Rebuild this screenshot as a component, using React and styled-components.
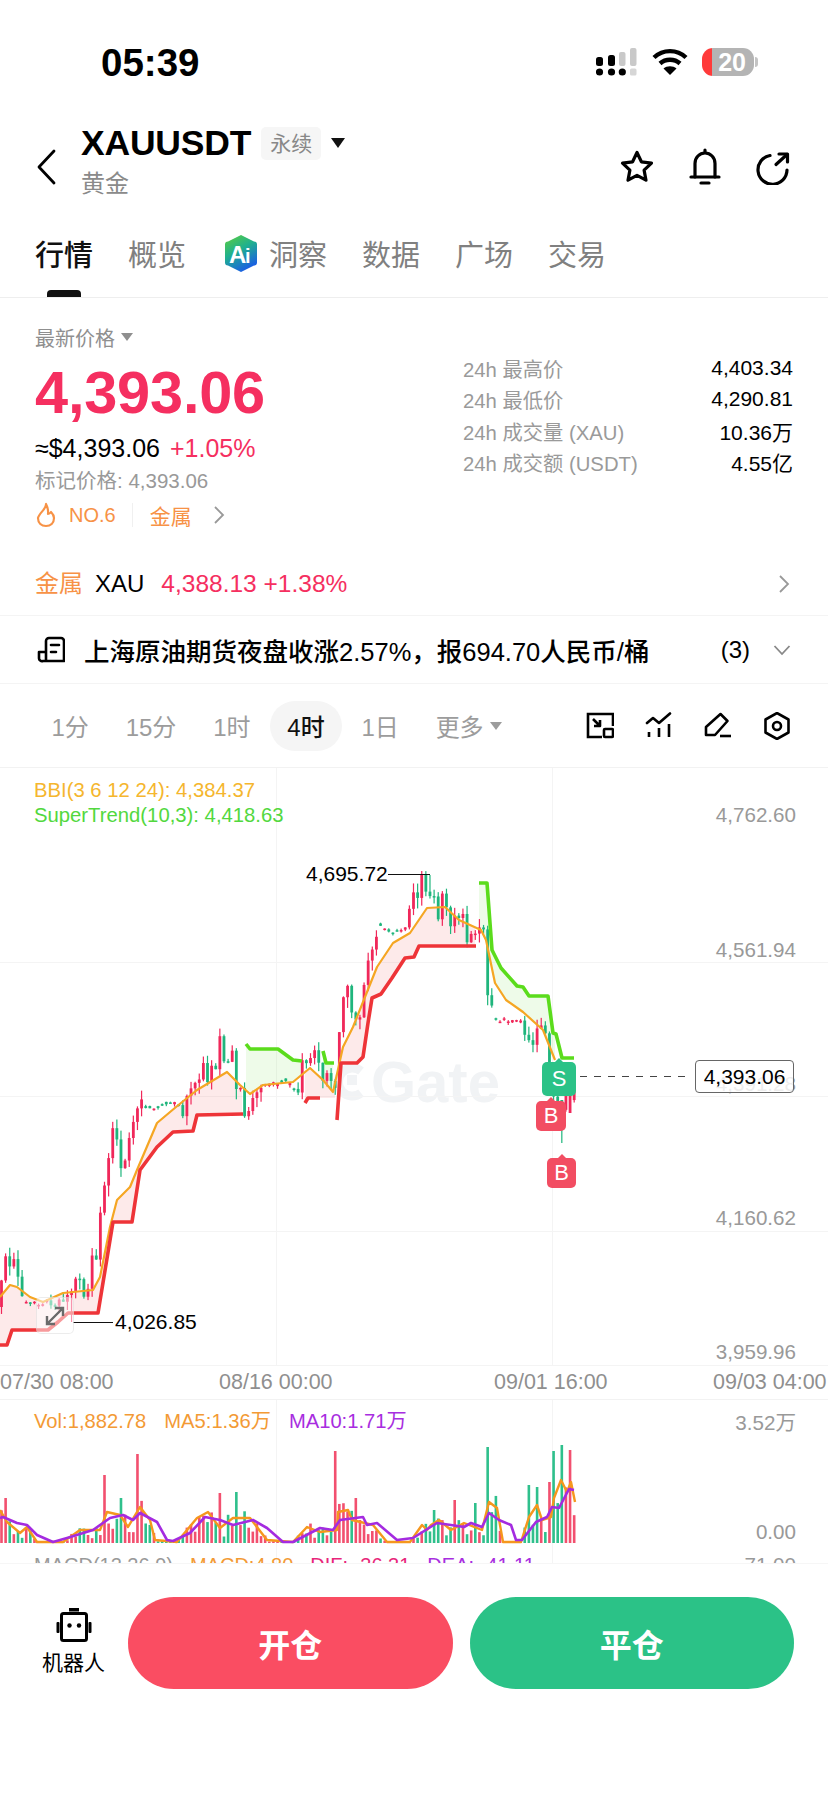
import React from 'react';
import styled, { createGlobalStyle } from 'styled-components';

const Global = createGlobalStyle`
  html, body { margin: 0; padding: 0; background: #fff; }
  body { font-family: "Liberation Sans", "Noto Sans CJK SC", sans-serif; color: #000; }
  * { box-sizing: border-box; }
`;

const RED = '#f52f60';
const CANDLE_RED = '#f0285a';
const CANDLE_GREEN = '#1fb57c';
const ORANGE = '#f79246';

/* ---------- chart data ---------- */
const interp = (pts, x) => {
  if (x <= pts[0][0]) return pts[0][1];
  for (let i = 1; i < pts.length; i++) {
    if (x <= pts[i][0]) {
      const [x0, y0] = pts[i - 1];
      const [x1, y1] = pts[i];
      return y0 + ((y1 - y0) * (x - x0)) / (x1 - x0 || 1);
    }
  }
  return pts[pts.length - 1][1];
};
const rng = (seed) => () => {
  seed = (seed + 0x6d2b79f5) | 0;
  let t = Math.imul(seed ^ (seed >>> 15), 1 | seed);
  t = (t + Math.imul(t ^ (t >>> 7), 61 | t)) ^ t;
  return ((t ^ (t >>> 14)) >>> 0) / 4294967296;
};
const toPts = (a) => a.map((p) => p.join(',')).join(' ');

const STEP = 4.12;
const COUNT = 140;
const pricePath = [[0,1307],[5,1262],[12,1268],[18,1290],[25,1302],[45,1304],[50,1296],[62,1288],[72,1296],[85,1290],[92,1270],[98,1240],[103,1205],[108,1170],[113,1142],[122,1165],[130,1125],[137,1105],[143,1110],[165,1105],[177,1100],[183,1118],[190,1100],[197,1065],[205,1078],[215,1058],[222,1045],[230,1052],[240,1090],[248,1115],[255,1095],[265,1085],[290,1082],[296,1090],[305,1062],[315,1055],[325,1072],[332,1100],[336,1085],[341,1010],[346,990],[352,1005],[360,1015],[365,985],[372,950],[378,925],[392,933],[405,930],[412,900],[420,888],[428,880],[437,915],[441,892],[452,923],[461,912],[470,950],[481,937],[486,925],[489,1033],[492,1020],[521,1020],[524,1017],[528,1055],[535,1030],[544,1035],[550,1060],[555,1090],[561,1120],[568,1100],[572,1090]];
const flats = [[25,50],[145,180],[265,296],[378,408],[492,522]];
const isFlat = (x) => flats.some(([a, b]) => x >= a && x <= b);

const buildCandles = () => {
  const r = rng(23);
  const out = [];
  let prev = pricePath[0][1];
  for (let i = 0; i < COUNT; i++) {
    const x = 1.5 + i * STEP;
    const flat = isFlat(x);
    const close = interp(pricePath, x) + (r() - 0.5) * (flat ? 3.5 : 32);
    const open = flat ? close + (r() - 0.5) * 5 : prev;
    const top = Math.min(open, close) - r() * (flat ? 1.5 : 9);
    const bottom = Math.max(open, close) + r() * (flat ? 3 : 11);
    out.push({ x, open, close, top, bottom });
    prev = close;
  }
  const nearest = (tx) => out.reduce((a, c) => (Math.abs(c.x - tx) < Math.abs(a.x - tx) ? c : a));
  nearest(428).top = 875;
  nearest(73).bottom = 1322;
  nearest(561).bottom = 1143;
  const a = nearest(561);
  a.open = 1100;
  a.close = 1110;
  const b = nearest(569);
  b.open = 1113;
  b.close = 1085;
  return out;
};
const candles = buildCandles();

const redSt = [
  [[0,1345],[7,1345],[12,1330],[35,1330],[48,1330],[58,1322],[68,1313],[98,1313],[113,1222],[132,1222],[140,1170],[157,1147],[173,1132],[193,1131],[197,1115],[243,1114]],
  [[305,1103],[308,1098],[320,1098]],
  [[337,1120],[341,1063],[357,1063],[363,1057],[368,1023],[372,998],[381,994],[392,978],[405,958],[414,957],[419,946],[476,946]],
];
const greenSt = [
  [[246,1044],[250,1049],[278,1049],[293,1060],[302,1061]],
  [[323,1051],[326,1063],[334,1063]],
  [[479,883],[487,883],[492,950],[501,968],[517,986],[523,987],[529,996],[548,996],[553,1033],[556,1034],[562,1058],[574,1058]],
];
const bbi = [[0,1297],[10,1285],[17,1287],[30,1297],[43,1302],[63,1293],[93,1290],[100,1277],[110,1227],[117,1200],[130,1187],[137,1170],[157,1123],[176,1107],[197,1090],[227,1072],[240,1085],[250,1094],[263,1085],[293,1082],[310,1068],[323,1080],[333,1092],[343,1047],[353,1027],[365,997],[377,967],[393,943],[410,933],[427,908],[445,907],[459,920],[481,930],[486,940],[495,983],[506,1000],[523,1012],[543,1030],[555,1060]];

const band = (a, b, x0, x1) => {
  const top = [];
  const bot = [];
  for (let x = x0; x <= x1; x += 2) {
    top.push([x, interp(a, x)]);
    bot.unshift([x, interp(b, x)]);
  }
  return toPts([...top, ...bot]);
};

const ma10 = [[0,1518],[3,1517],[17,1523],[27,1525],[37,1535],[53,1542],[67,1538],[93,1530],[110,1518],[123,1515],[133,1520],[140,1513],[157,1522],[167,1540],[173,1541],[190,1533],[205,1517],[220,1520],[233,1525],[253,1520],[267,1528],[283,1542],[293,1542],[320,1528],[333,1530],[340,1520],[363,1517],[367,1525],[377,1523],[397,1540],[413,1538],[437,1523],[451,1525],[464,1527],[471,1523],[482,1527],[489,1513],[499,1520],[511,1525],[516,1540],[522,1540],[536,1522],[547,1517],[552,1507],[559,1508],[569,1489],[574,1490]];
const ma5 = [[0,1510],[7,1522],[20,1533],[27,1527],[37,1542],[63,1542],[80,1530],[100,1530],[107,1512],[120,1515],[128,1527],[140,1507],[150,1520],[155,1540],[177,1542],[197,1518],[208,1512],[220,1528],[233,1518],[250,1518],[267,1540],[293,1542],[307,1527],[320,1532],[337,1530],[338,1512],[348,1510],[352,1520],[373,1525],[387,1542],[410,1542],[422,1525],[427,1530],[431,1525],[439,1520],[451,1530],[464,1523],[482,1530],[489,1502],[497,1508],[503,1542],[521,1542],[529,1517],[537,1505],[542,1520],[551,1517],[554,1498],[561,1480],[567,1492],[571,1482],[575,1502]];
const spikes = { 6: 1498, 139: 1454, 105: 1475, 337: 1451, 221: 1493, 238: 1492, 122: 1498, 354: 1498, 486: 1447, 489: 1473, 552: 1451, 561: 1445, 569: 1450, 527: 1485, 536: 1487, 549: 1482, 476: 1503, 436: 1510, 454: 1500 };
const greenSpikes = new Set([486, 489, 552, 561, 527, 536, 238, 122, 476, 436]);
const buildBars = () => {
  const r = rng(5);
  const keys = Object.keys(spikes).map(Number);
  return candles.map((c) => {
    const k = keys.find((s) => Math.abs(s - c.x) <= STEP / 2);
    const avg = 1543 - interp(ma5, c.x);
    const h = k !== undefined ? 1543 - spikes[k] : Math.max(1.5, avg * (0.35 + r() * 1.05));
    return { x: c.x, h, up: k !== undefined ? !greenSpikes.has(k) : c.close < c.open };
  });
};
const bars = buildBars();

/* ---------- layout ---------- */
const Page = styled.div`
  width: 828px;
  height: 1796px;
  display: flex;
  flex-direction: column;
  overflow: hidden;
  background: #fff;
`;
const StatusBar = styled.div`
  height: 124px;
  flex: none;
  display: flex;
  align-items: center;
  justify-content: space-between;
  padding: 0 70px 0 101px;
`;
const Clock = styled.div`
  font-size: 38.5px;
  font-weight: 700;
  line-height: 40px;
  padding-top: 2px;
`;
const StatusIcons = styled.div`
  display: flex;
  align-items: center;
  gap: 14px;
`;
const Battery = styled.div`
  position: relative;
  width: 52px;
  height: 28px;
  border-radius: 11px;
  overflow: hidden;
  background: linear-gradient(90deg, #ff3a3a 0 10px, #b4b4b4 10px);
  color: #fff;
  font-size: 25px;
  font-weight: 700;
  line-height: 28px;
  text-align: right;
  padding-right: 8px;
`;
const BatteryWrap = styled.div`
  display: flex;
  align-items: center;
  gap: 1px;
`;
const BatteryNub = styled.div`
  width: 3px;
  height: 10px;
  border-radius: 0 3px 3px 0;
  background: #c4c4c4;
`;
const Header = styled.div`
  height: 85px;
  flex: none;
  display: flex;
  align-items: center;
  padding: 0 35px 0 35px;
`;
const BackBtn = styled.div`
  width: 46px;
  height: 40px;
  display: flex;
  align-items: center;
`;
const TitleBlock = styled.div`
  display: flex;
  flex-direction: column;
  gap: 8px;
  padding-bottom: 9px;
`;
const TitleRow = styled.div`
  display: flex;
  align-items: center;
  gap: 10px;
`;
const Symbol = styled.div`
  font-size: 35.5px;
  font-weight: 700;
  line-height: 36px;
  letter-spacing: -0.2px;
`;
const Tag = styled.div`
  height: 33px;
  padding: 0 9px;
  border-radius: 5px;
  background: #f6f6f6;
  color: #888;
  font-size: 21px;
  line-height: 33px;
`;
const TriDown = styled.span`
  display: inline-block;
  width: 0;
  height: 0;
  border-left: ${(p) => p.$w}px solid transparent;
  border-right: ${(p) => p.$w}px solid transparent;
  border-top: ${(p) => p.$h}px solid ${(p) => p.$c};
  margin-left: ${(p) => p.$ml || 0}px;
`;
const SubName = styled.div`
  font-size: 24px;
  line-height: 30px;
  color: #8a8a8a;
`;
const HeaderActions = styled.div`
  margin-left: auto;
  display: flex;
  gap: 28px;
`;
const ActionIcon = styled.div`
  width: 40px;
  height: 40px;
  display: flex;
  align-items: center;
  justify-content: center;
`;
const Tabs = styled.div`
  height: 89px;
  flex: none;
  display: flex;
  align-items: center;
  gap: 35px;
  padding-left: 35px;
  border-bottom: 1px solid #eeeeee;
`;
const Tab = styled.div`
  position: relative;
  height: 100%;
  display: flex;
  align-items: center;
  gap: 11px;
  font-size: 29px;
  font-weight: ${(p) => (p.$active ? 500 : 400)};
  color: ${(p) => (p.$active ? '#111' : '#808080')};
  margin-left: ${(p) => p.$ml || 0}px;
  ${(p) =>
    p.$active &&
    `&::after { content: ''; position: absolute; left: 12px; right: 12px; bottom: 0; height: 7px; border-radius: 4px 4px 0 0; background: #111; }`}
`;
const Summary = styled.div`
  flex: none;
  display: flex;
  justify-content: space-between;
  padding: 0 35px;
`;
const PriceCol = styled.div`
  display: flex;
  flex-direction: column;
`;
const PriceLabel = styled.div`
  margin-top: 26px;
  height: 26px;
  display: flex;
  align-items: center;
  color: #8f8f8f;
  font-size: 20px;
`;
const BigPrice = styled.div`
  margin-top: 13px;
  height: 60px;
  font-size: 59.500px;
  font-weight: 700;
  line-height: 60px;
  color: ${RED};
  letter-spacing: -0.2px;
`;
const FiatRow = styled.div`
  margin-top: 10px;
  height: 30px;
  display: flex;
  gap: 10px;
  font-size: 25px;
  line-height: 30px;
`;
const Change = styled.span`
  color: ${RED};
`;
const MarkPrice = styled.div`
  margin-top: 4px;
  height: 28px;
  color: #999;
  font-size: 20.500px;
  line-height: 28px;
`;
const HotRow = styled.div`
  margin-top: 6px;
  height: 28px;
  display: flex;
  align-items: center;
  color: ${ORANGE};
  font-size: 20px;
`;
const HotSep = styled.span`
  width: 1px;
  height: 24px;
  background: #f0f0f0;
  margin: 0 17px 0 16px;
`;
const HotCategory = styled.span`
  font-size: 21px;
`;
const Stats = styled.div`
  width: 330px;
  padding-top: 54px;
  display: flex;
  flex-direction: column;
`;
const StatRow = styled.div`
  height: 31.500px;
  display: flex;
  justify-content: space-between;
  align-items: center;
  font-size: 21px;
`;
const StatLabel = styled.span`
  color: #9a9a9a;
  font-size: 20.300px;
`;
const InfoRow = styled.div`
  flex: none;
  margin-top: 23px;
  height: 64px;
  display: flex;
  align-items: center;
  padding: 0 38px 0 35px;
  font-size: 24px;
  line-height: 30px;
  border-bottom: 1px solid #f4f4f4;
`;
const InfoTag = styled.span`
  color: ${ORANGE};
  margin-right: 12px;
`;
const InfoNums = styled.span`
  color: ${RED};
  margin-left: 17px;
  font-size: 24.500px;
`;
const Trailing = styled.span`
  margin-left: auto;
  display: flex;
  align-items: center;
`;
const NewsRow = styled.div`
  flex: none;
  height: 68px;
  display: flex;
  align-items: center;
  padding: 0 37px;
  font-size: 25.500px;
  font-weight: 500;
  border-bottom: 1px solid #f4f4f4;
`;
const NewsText = styled.span`
  margin-left: 19px;
`;
const NewsCount = styled.span`
  margin-right: 23px;
  font-size: 24px;
  font-weight: 400;
`;
const Periods = styled.div`
  flex: none;
  height: 84px;
  display: flex;
  align-items: center;
  gap: 1.800px;
  padding: 0 37px 0 34px;
  border-bottom: 1px solid #f2f2f2;
`;
const Period = styled.div`
  height: 50px;
  padding: 0 17.500px;
  border-radius: 25px;
  display: flex;
  align-items: center;
  font-size: 24px;
  color: ${(p) => (p.$active ? '#111' : '#9c9c9c')};
  font-weight: ${(p) => (p.$active ? 500 : 400)};
  background: ${(p) => (p.$active ? '#f5f5f5' : 'transparent')};
`;
const Tools = styled.div`
  margin-left: auto;
  display: flex;
  gap: 31px;
`;
const PricePane = styled.div`
  position: relative;
  flex: none;
  height: 598px;
  overflow: hidden;
`;
const Legend = styled.div`
  position: absolute;
  left: 34px;
  top: ${(p) => p.$top}px;
  color: ${(p) => p.$c};
  font-size: 20.300px;
  line-height: 24px;
`;
const AxisLabel = styled.div`
  position: absolute;
  right: 32px;
  top: ${(p) => p.$top}px;
  color: #999;
  font-size: 20.600px;
  line-height: 24px;
`;
const Watermark = styled.div`
  position: absolute;
  left: 331px;
  top: 289px;
  display: flex;
  align-items: center;
  gap: 6px;
  color: #f1f3f5;
  font-size: 58px;
  font-weight: 700;
  line-height: 50px;
`;
const ChartSvg = styled.svg`
  position: absolute;
  inset: 0;
  display: block;
`;
const Extreme = styled.div`
  position: absolute;
  left: ${(p) => p.$x}px;
  top: ${(p) => p.$top}px;
  font-size: 21px;
  line-height: 24px;
  color: #000;
`;
const ExpandBtn = styled.div`
  position: absolute;
  left: 36px;
  top: 529px;
  width: 38px;
  height: 37px;
  border: 1px solid rgba(200, 200, 200, 0.35);
  border-radius: 5px;
  background: rgba(255, 255, 255, 0.5);
  display: flex;
  align-items: center;
  justify-content: center;
`;
const Mark = styled.div`
  position: absolute;
  left: ${(p) => p.$x}px;
  top: ${(p) => p.$top}px;
  width: ${(p) => p.$w}px;
  height: ${(p) => p.$h}px;
  border-radius: 5px;
  background: ${(p) => p.$c};
  color: #fff;
  font-size: 22px;
  display: flex;
  align-items: center;
  justify-content: center;
  &::before {
    content: '';
    position: absolute;
    left: 50%;
    top: -4px;
    margin-left: -4px;
    border-left: 4px solid transparent;
    border-right: 4px solid transparent;
    border-bottom: 4px solid ${(p) => p.$c};
  }
`;
const LastLine = styled.div`
  position: absolute;
  left: 580px;
  top: 308px;
  width: 110px;
  height: 1px;
  background: repeating-linear-gradient(90deg, #444 0 7px, transparent 7px 14px);
`;
const LastTag = styled.div`
  position: absolute;
  left: 695px;
  top: 292px;
  width: 99px;
  height: 33px;
  border: 1px solid #666;
  border-radius: 4px;
  background: rgba(255, 255, 255, 0.82);
  font-size: 21px;
  line-height: 31px;
  text-align: center;
`;
const TimeAxis = styled.div`
  flex: none;
  height: 34px;
  display: grid;
  grid-template-columns: 219px 275px 219px 1fr;
  align-items: center;
  color: #8f8f8f;
  font-size: 21.500px;
  white-space: nowrap;
  border-bottom: 1px solid #f2f2f2;
`;
const VolPane = styled.div`
  position: relative;
  flex: none;
  height: 163px;
  overflow: hidden;
`;
const VolHeader = styled.div`
  height: 42px;
  padding: 9px 0 0 34px;
  display: flex;
  gap: 18px;
  font-size: 20.200px;
  line-height: 24px;
  position: relative;
`;
const VolItem = styled.span`
  color: ${(p) => p.$c};
`;
const MacdRow = styled.div`
  position: absolute;
  left: 34px;
  top: 153px;
  display: flex;
  gap: 17px;
  font-size: 20px;
  line-height: 24px;
  white-space: nowrap;
`;
const Footer = styled.div`
  flex: 1;
  display: flex;
  align-items: flex-start;
  gap: 16px;
  padding: 33px 34px 0 35px;
  border-top: 1px solid #f6f6f6;
`;
const BotEntry = styled.div`
  width: 77px;
  padding-top: 11px;
  display: flex;
  flex-direction: column;
  align-items: center;
  gap: 7px;
  font-size: 21px;
  line-height: 28px;
`;
const TradeBtns = styled.div`
  flex: 1;
  display: flex;
  gap: 17px;
`;
const TradeBtn = styled.div`
  flex: 1;
  height: 92px;
  border-radius: 46px;
  background: ${(p) => p.$c};
  color: #fff;
  font-size: 32px;
  font-weight: 700;
  display: flex;
  align-items: center;
  justify-content: center;
`;

/* ---------- icons ---------- */
const Line = ({ w = 28, h = 28, children, sw = 3 }) => (
  <svg width={w} height={h} viewBox={`0 0 ${w} ${h}`} fill="none" stroke="#000" strokeWidth={sw} strokeLinecap="round" strokeLinejoin="round">
    {children}
  </svg>
);
const Signal = () => (
  <svg width="42" height="30" viewBox="0 0 42 30">
    <rect x="0" y="10" width="7" height="9" rx="2.5" fill="#000" />
    <rect x="12" y="8" width="7" height="11" rx="2.5" fill="#000" />
    <rect x="23" y="5" width="6.5" height="14" rx="2" fill="#c9c9c9" />
    <rect x="34" y="1" width="6.5" height="18" rx="2" fill="#c9c9c9" />
    <circle cx="3.5" cy="25" r="3.6" fill="#000" />
    <circle cx="15.5" cy="25" r="3.6" fill="#000" />
    <circle cx="26.3" cy="25" r="3.6" fill="#000" />
    <rect x="34" y="21.5" width="6.5" height="7" rx="1.5" fill="#d6d6d6" />
  </svg>
);
const Wifi = () => (
  <svg width="36" height="28" viewBox="0 0 36 28" fill="none" stroke="#000" strokeWidth="4.4">
    <path d="M2 9.5C11 1 25 1 34 9.5" />
    <path d="M8 15.5C13.5 10.5 22.5 10.5 28 15.5" />
    <path d="M18 27l-6.5-6.5c3.5-3 9.500-3 13 0z" fill="#000" stroke="none" />
  </svg>
);
const Gate = () => (
  <svg width="34" height="38" viewBox="0 0 34 38" fill="none" stroke="#f1f3f5" strokeWidth="9">
    <path d="M30 8A14 14 0 1 0 30 30" />
    <rect x="16" y="12" width="10" height="10" fill="#f1f3f5" stroke="none" />
  </svg>
);
const AiLogo = () => (
  <svg width="34" height="39" viewBox="0 0 34 39">
    <defs>
      <linearGradient id="aigrad" x1="0" y1="0" x2="0.5" y2="1">
        <stop offset="0" stopColor="#5fcf3a" />
        <stop offset="0.5" stopColor="#1fb08f" />
        <stop offset="1" stopColor="#1a62e0" />
      </linearGradient>
    </defs>
    <path d="M17 1l13 6.500a3 3 0 0 1 3 3v18a3 3 0 0 1-3 3L17 38 4 31.500a3 3 0 0 1-3-3v-18a3 3 0 0 1 3-3z" fill="url(#aigrad)" />
    <text x="5" y="29" fontSize="24" fontWeight="700" fill="#fff" fontFamily="Liberation Sans">A</text>
    <text x="21" y="29" fontSize="20" fontWeight="700" fill="#fff" fontFamily="Liberation Sans">i</text>
  </svg>
);

export default function App() {
  const stats = [
    ['24h 最高价', '4,403.34'],
    ['24h 最低价', '4,290.81'],
    ['24h 成交量 (XAU)', '10.36万'],
    ['24h 成交额 (USDT)', '4.55亿'],
  ];
  return (
    <Page>
      <Global />
      <StatusBar>
        <Clock>05:39</Clock>
        <StatusIcons>
          <Signal />
          <Wifi />
          <BatteryWrap>
            <Battery>20</Battery>
            <BatteryNub />
          </BatteryWrap>
        </StatusIcons>
      </StatusBar>

      <Header>
        <BackBtn>
          <Line w={24} h={38} sw={2.8}>
            <path d="M19 3L4 19l15 16" />
          </Line>
        </BackBtn>
        <TitleBlock>
          <TitleRow>
            <Symbol>XAUUSDT</Symbol>
            <Tag>永续</Tag>
            <TriDown $w={7.5} $h={10} $c="#111" />
          </TitleRow>
          <SubName>黄金</SubName>
        </TitleBlock>
        <HeaderActions>
          <ActionIcon>
            <Line w={36} h={36} sw={3.2}>
              <path d="M18 3.500l4.400 9.300 10.100 1.300-7.400 7 1.900 10.100-9-4.900-9 4.900 1.900-10.100-7.400-7 10.100-1.300z" />
            </Line>
          </ActionIcon>
          <ActionIcon>
            <Line w={34} h={38} sw={3.2}>
              <path d="M3 29h28" />
              <path d="M7 29V15.500C7 9.500 11.500 5 17 5s10 4.500 10 10.500V29" />
              <path d="M17 2v2.500" />
              <path d="M13 35h8" />
            </Line>
          </ActionIcon>
          <ActionIcon>
            <Line w={36} h={36} sw={3.2}>
              <path d="M15 6.500A14.500 14.500 0 1 0 32 21" />
              <path d="M21 15.500L32 5.500" />
              <path d="M24 5h8.500v8" />
            </Line>
          </ActionIcon>
        </HeaderActions>
      </Header>

      <Tabs>
        <Tab $active>行情</Tab>
        <Tab>概览</Tab>
        <Tab $ml={3}>
          <AiLogo />
          洞察
        </Tab>
        <Tab>数据</Tab>
        <Tab>广场</Tab>
        <Tab>交易</Tab>
      </Tabs>

      <Summary>
        <PriceCol>
          <PriceLabel>
            最新价格
            <TriDown $w={6} $h={8} $c="#8f8f8f" $ml={6} />
          </PriceLabel>
          <BigPrice>4,393.06</BigPrice>
          <FiatRow>
            ≈$4,393.06
            <Change>+1.05%</Change>
          </FiatRow>
          <MarkPrice>标记价格: 4,393.06</MarkPrice>
          <HotRow>
            <svg width="22" height="26" viewBox="0 0 22 26" fill="none" stroke={ORANGE} strokeWidth="2.2" strokeLinejoin="round" style={{ marginRight: 12 }}>
              <path d="M11 2c.5 5-7 9-8 14 0 5 3.500 8 8 8s8-3 8-8c0-3-2-5-3-6-1 1.500-2 2-3 2 .5-4-.5-7-2-10z" />
            </svg>
            NO.6
            <HotSep />
            <HotCategory>金属</HotCategory>
            <svg width="14" height="20" viewBox="0 0 14 20" fill="none" stroke="#999" strokeWidth="1.800" style={{ marginLeft: 20 }}>
              <path d="M3 2l8 8-8 8" />
            </svg>
          </HotRow>
        </PriceCol>
        <Stats>
          {stats.map(([k, v]) => (
            <StatRow key={k}>
              <StatLabel>{k}</StatLabel>
              <span>{v}</span>
            </StatRow>
          ))}
        </Stats>
      </Summary>

      <InfoRow>
        <InfoTag>金属</InfoTag>
        XAU
        <InfoNums>4,388.13 +1.38%</InfoNums>
        <Trailing>
          <svg width="12" height="20" viewBox="0 0 12 20" fill="none" stroke="#999" strokeWidth="1.800">
            <path d="M2 2l8 8-8 8" />
          </svg>
        </Trailing>
      </InfoRow>

      <NewsRow>
        <Line w={28} h={28} sw={2.6}>
          <path d="M9 25V5a3 3 0 0 1 3-3h12a3 3 0 0 1 3 3v20H6a3 3 0 0 1-4-3v-6h7" />
          <path d="M14 9h8M14 16h5" />
        </Line>
        <NewsText>上海原油期货夜盘收涨2.57%，报694.70人民币/桶</NewsText>
        <Trailing>
          <NewsCount>(3)</NewsCount>
          <svg width="18" height="12" viewBox="0 0 18 12" fill="none" stroke="#888" strokeWidth="1.800">
            <path d="M1.500 2l7.500 8 7.500-8" />
          </svg>
        </Trailing>
      </NewsRow>

      <Periods>
        <Period>1分</Period>
        <Period>15分</Period>
        <Period>1时</Period>
        <Period $active>4时</Period>
        <Period>1日</Period>
        <Period>
          更多
          <TriDown $w={6} $h={8} $c="#9c9c9c" $ml={6} />
        </Period>
        <Tools>
          <Line sw={2.600}>
            <path d="M16 25H2V2h25v12" strokeLinecap="butt" strokeLinejoin="miter" />
            <rect x="18" y="17" width="9" height="8" rx="1" />
            <path d="M7 7l7 7M14 8v6H8" strokeLinecap="butt" />
          </Line>
          <Line sw={2.600}>
            <path d="M2 11l6-5 6 5L25 1.500" />
            <path d="M4 20v5M14 16v9M24 12v13" strokeLinecap="butt" />
          </Line>
          <Line sw={2.600}>
            <path d="M16.500 2l7 7L11 23H2v-8z" />
            <path d="M16 24h11" strokeLinecap="butt" />
          </Line>
          <Line sw={2.600}>
            <path d="M14 1l11.500 6.500v13L14 27 2.500 20.500v-13z" />
            <circle cx="14" cy="14" r="4" />
          </Line>
        </Tools>
      </Periods>

      <PricePane>
        <Watermark>
          <Gate />
          Gate
        </Watermark>
        <ChartSvg width="828" height="598" viewBox="0 768 828 598">
          <g stroke="#f4f4f4" strokeWidth="1">
            <path d="M0 962.500H828M0 1096.500H828M0 1231.500H828M0 1365.500H828M276.500 768V1366M552.500 768V1366" />
          </g>
          <g fill="rgba(240,60,60,0.11)">
            <polygon points={band(bbi, redSt[0], 0, 243)} />
            <polygon points={band(bbi, redSt[1], 305, 336)} />
            <polygon points={band(bbi, redSt[2], 337, 476)} />
          </g>
          <g fill="rgba(90,220,40,0.1)">
            <polygon points={band(greenSt[0], bbi, 246, 302)} />
            <polygon points={band(greenSt[1], bbi, 323, 334)} />
            <polygon points={band(greenSt[2], bbi, 479, 555)} />
          </g>
          {candles.map((c) => {
            const col = c.close < c.open ? CANDLE_RED : CANDLE_GREEN;
            const y = Math.min(c.open, c.close);
            return (
              <g key={c.x} fill={col}>
                <rect x={c.x - 0.6} y={c.top} width="1.2" height={c.bottom - c.top} />
                <rect x={c.x - 1.4} y={y} width="2.8" height={Math.max(1.5, Math.abs(c.open - c.close))} />
              </g>
            );
          })}
          <polyline points={toPts(bbi)} fill="none" stroke="#f5a623" strokeWidth="2.200" strokeLinejoin="round" />
          <g fill="none" stroke="#ee3438" strokeWidth="3.600" strokeLinejoin="round">
            {redSt.map((s, i) => (
              <polyline key={i} points={toPts(s)} />
            ))}
          </g>
          <g fill="none" stroke="#5bdc1c" strokeWidth="3.600" strokeLinejoin="round">
            {greenSt.map((s, i) => (
              <polyline key={i} points={toPts(s)} />
            ))}
          </g>
          <path d="M388 874.500H430M73 1322.500H113" stroke="#111" strokeWidth="1.200" />
        </ChartSvg>
        <Legend $top={10} $c="#f5b62e">BBI(3 6 12 24): 4,384.37</Legend>
        <Legend $top={35} $c="#52d83e">SuperTrend(10,3): 4,418.63</Legend>
        <AxisLabel $top={35}>4,762.60</AxisLabel>
        <AxisLabel $top={170}>4,561.94</AxisLabel>
        <AxisLabel $top={304}>4,391.28</AxisLabel>
        <AxisLabel $top={438}>4,160.62</AxisLabel>
        <AxisLabel $top={572}>3,959.96</AxisLabel>
        <Extreme $x={306} $top={94}>4,695.72</Extreme>
        <Extreme $x={115} $top={542}>4,026.85</Extreme>
        <ExpandBtn>
          <svg width="22" height="22" viewBox="0 0 22 22" fill="none" stroke="#6a6a6a" strokeWidth="2.400">
            <path d="M4 18L18 4M11 3h8v8M3 11v8h8" />
          </svg>
        </ExpandBtn>
        <Mark $x={536} $top={333} $w={30} $h={30} $c="#f24d62">B</Mark>
        <Mark $x={542} $top={294} $w={34} $h={34} $c="#2bc287">S</Mark>
        <Mark $x={547} $top={390} $w={29} $h={30} $c="#f24d62">B</Mark>
        <LastLine />
        <LastTag>4,393.06</LastTag>
      </PricePane>

      <TimeAxis>
        <span>07/30 08:00</span>
        <span>08/16 00:00</span>
        <span>09/01 16:00</span>
        <span>09/03 04:00</span>
      </TimeAxis>

      <VolPane>
        <ChartSvg width="828" height="163" viewBox="0 1400 828 163">
          <path d="M276.500 1400V1563M552.500 1400V1563" stroke="#f4f4f4" />
          {bars.map((b) => (
            <rect key={b.x} x={b.x - 1.300} y={1543 - b.h} width="2.600" height={b.h} fill={b.up ? '#f2506f' : '#2fc08c'} />
          ))}
          <polyline points={toPts(ma5)} fill="none" stroke="#f5971d" strokeWidth="2.400" strokeLinejoin="round" />
          <polyline points={toPts(ma10)} fill="none" stroke="#a42be0" strokeWidth="2.600" strokeLinejoin="round" />
        </ChartSvg>
        <VolHeader>
          <VolItem $c="#f39a35">Vol:1,882.78</VolItem>
          <VolItem $c="#f39a35">MA5:1.36万</VolItem>
          <VolItem $c="#a82ee0">MA10:1.71万</VolItem>
        </VolHeader>
        <AxisLabel $top={11}>3.52万</AxisLabel>
        <AxisLabel $top={120}>0.00</AxisLabel>
        <AxisLabel $top={153}>71.00</AxisLabel>
        <MacdRow>
          <VolItem $c="#999">MACD(12,26,9)</VolItem>
          <VolItem $c="#f39a35">MACD:4.80</VolItem>
          <VolItem $c="#e8267a">DIF: -36.31</VolItem>
          <VolItem $c="#a82ee0">DEA: -41.11</VolItem>
        </MacdRow>
      </VolPane>

      <Footer>
        <BotEntry>
          <svg width="36" height="34" viewBox="0 0 36 34">
            <rect x="13" y="0" width="10" height="3.500" fill="#000" />
            <rect x="5.500" y="5.500" width="25" height="27" rx="2" fill="none" stroke="#000" strokeWidth="3" />
            <rect x="0.500" y="14" width="3" height="11" rx="1" fill="#000" />
            <rect x="32.500" y="14" width="3" height="11" rx="1" fill="#000" />
            <circle cx="13.500" cy="17.500" r="2.200" fill="#000" />
            <circle cx="23" cy="17.500" r="2.200" fill="#000" />
          </svg>
          机器人
        </BotEntry>
        <TradeBtns>
          <TradeBtn $c="#fa4d62">开仓</TradeBtn>
          <TradeBtn $c="#2bc287">平仓</TradeBtn>
        </TradeBtns>
      </Footer>
    </Page>
  );
}
